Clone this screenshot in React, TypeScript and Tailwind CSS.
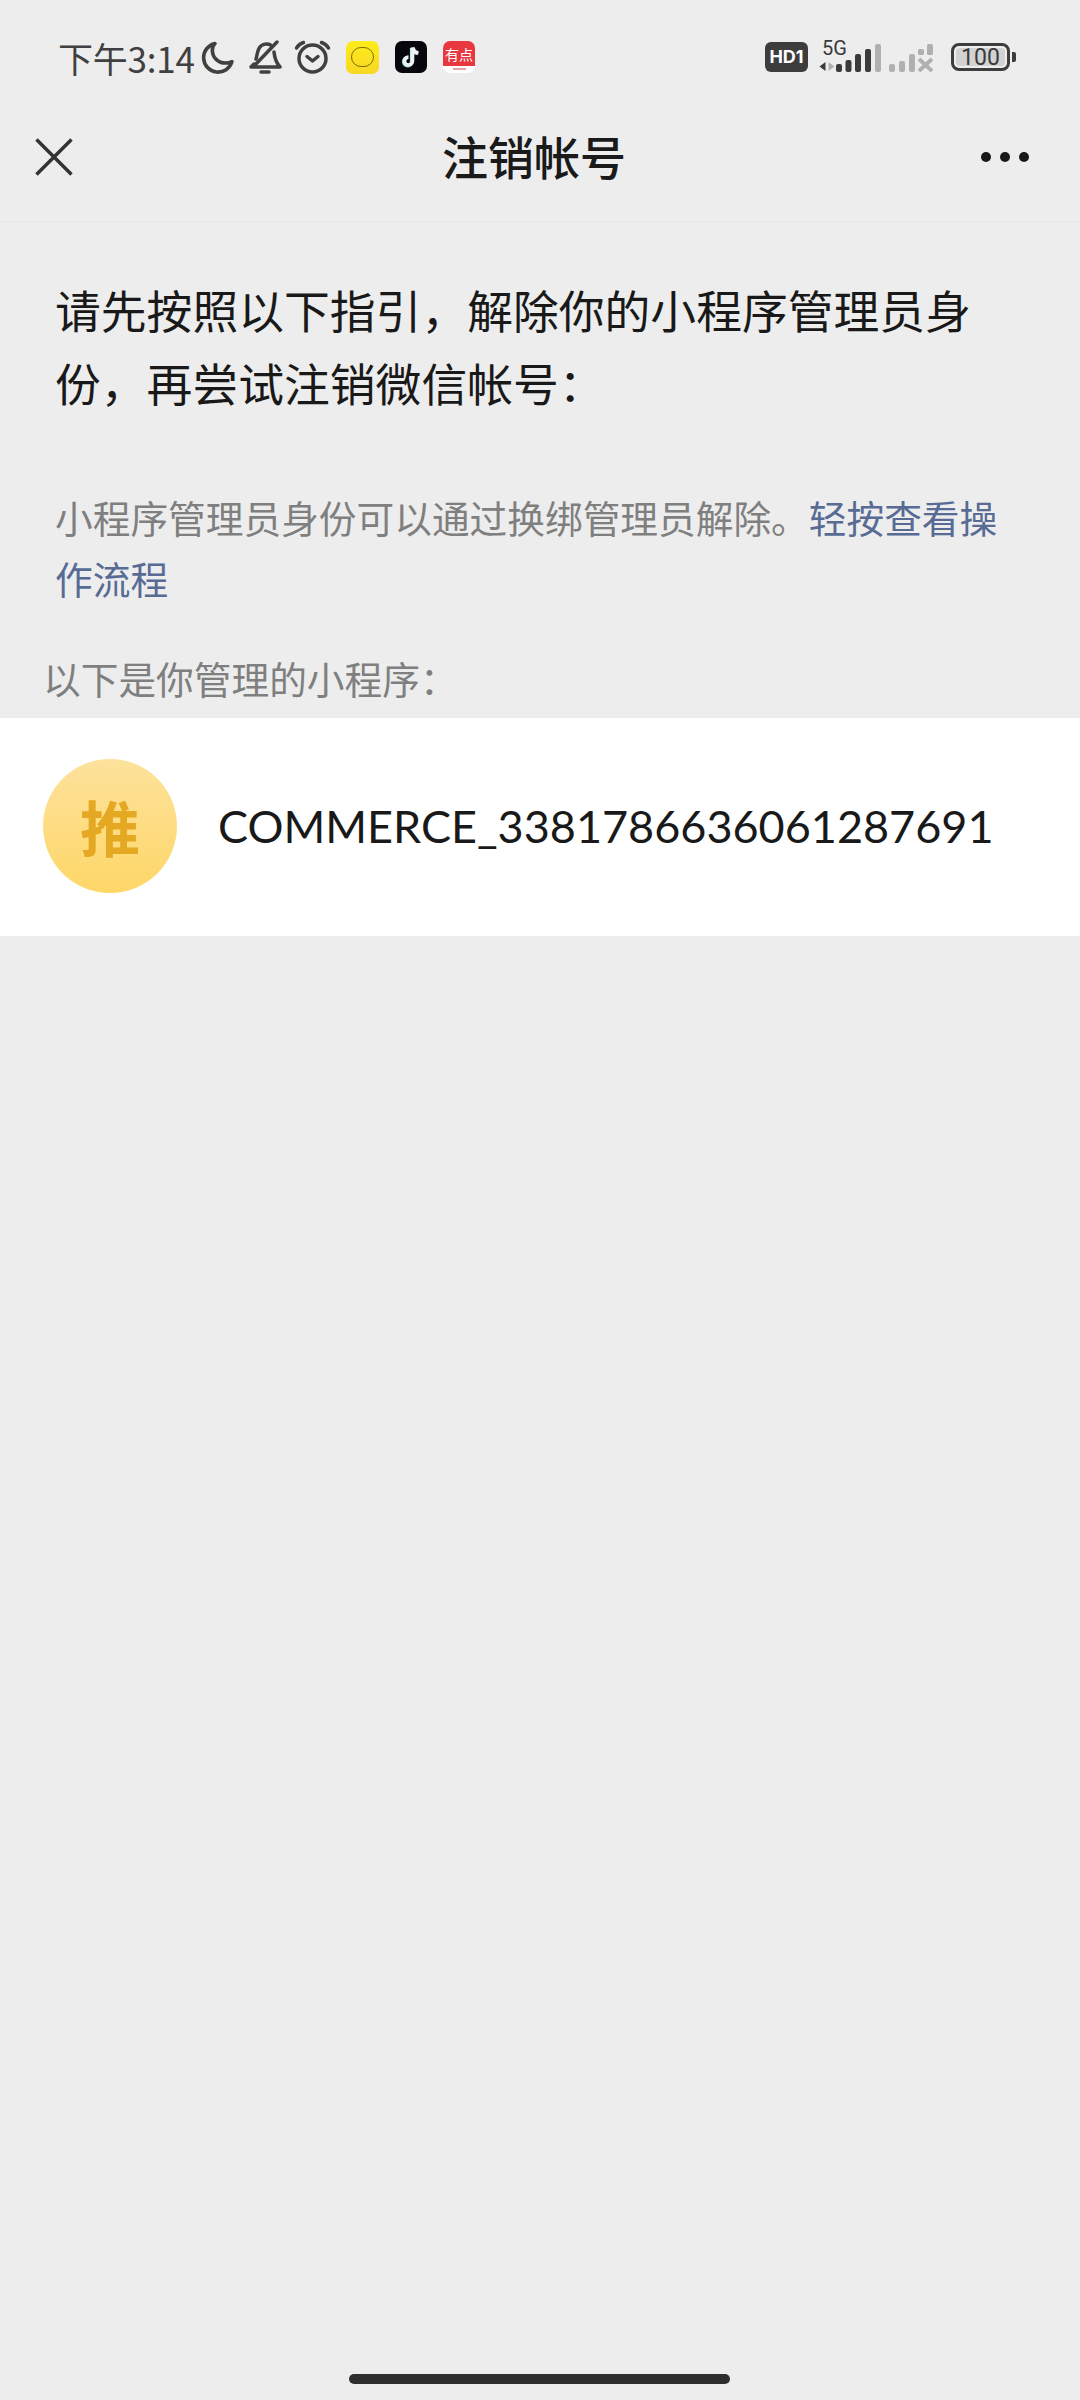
const cjk = '"Noto Sans CJK SC", sans-serif';
const comma = '\uFF0C';
const colon = '\uFF1A';

function Moon() {
    return (
        <svg width="33" height="33" viewBox="0 0 32 32" fill="none">
            <path d="M13.500 2.500A14 14 0 1 0 30 20c-2 1-4 1.400-6 1.400C16.500 21.400 11 16 11 9c0-2.400.6-4.600 2.500-6.500z" stroke="#404040" strokeWidth="3.500" strokeLinejoin="round" />
        </svg>
    );
}

function Bell() {
    return (
        <svg width="34" height="36" viewBox="0 0 34 36" fill="none" stroke="#404040" strokeWidth="3.500" strokeLinecap="round" strokeLinejoin="round">
            <path d="M8 20c1-3 1-6 2.500-9.500 1.500-3.500 4.500-5.500 8-5.500 1.500 0 3 .4 4 1" />
            <path d="M26 13c.5 5 1.500 10 6 15H3l3-3" />
            <path d="M29 3 6 27" />
            <path d="M13 33h8" />
        </svg>
    );
}

function Alarm() {
    return (
        <svg width="37" height="36" viewBox="0 0 36 36" fill="none" stroke="#404040" strokeWidth="3.500" strokeLinecap="round" strokeLinejoin="round">
            <circle cx="18" cy="19.500" r="13.500" />
            <path d="M12.500 17.500 18 22l5.500-4.500" />
            <path d="M2 9C4 6 6 4.500 9 3.500" />
            <path d="M34 9C32 6 30 4.500 27 3.500" />
        </svg>
    );
}

function TikTok() {
    return (
        <svg width="32" height="32" viewBox="0 0 31 32" className="rounded-[7px] bg-[#07060d]">
            <path d="M17 6.500v13.500a4 4 0 1 1-4-4" fill="none" stroke="#8fe6ea" strokeWidth="3.600" transform="translate(-0.800 0.600)" />
            <path d="M17.500 6.500c.4 3 2.400 5 5.500 5.300" fill="none" stroke="#8fe6ea" strokeWidth="3.600" transform="translate(-0.800 0.600)" />
            <path d="M17 6.500v13.500a4 4 0 1 1-4-4" fill="none" stroke="#f0f0f0" strokeWidth="3.600" />
            <path d="M17.500 6.500c.4 3 2.400 5 5.500 5.300" fill="none" stroke="#f0f0f0" strokeWidth="3.600" />
        </svg>
    );
}

function Signal() {
    return (
        <svg width="62" height="30" viewBox="0 0 62 30">
            <rect x="17" y="22" width="6" height="8" rx="2" fill="#3a3a3a" />
            <rect x="26.500" y="18" width="6" height="12" rx="2" fill="#3a3a3a" />
            <rect x="36" y="12" width="6" height="18" rx="2" fill="#3a3a3a" />
            <rect x="46" y="7" width="6" height="23" rx="2" fill="#3a3a3a" />
            <rect x="56" y="2" width="6" height="28" rx="2" fill="#b0b0b0" />
            <path d="M6.500 20v9L0.500 24.500z" fill="#3a3a3a" />
            <path d="M9.500 20v9l6-4.500z" fill="#b0b0b0" />
        </svg>
    );
}

function SignalOff() {
    return (
        <svg width="44" height="30" viewBox="0 0 44 30">
            <rect x="0" y="22" width="6" height="8" rx="2" fill="#b0b0b0" />
            <rect x="10" y="19" width="6" height="11" rx="2" fill="#b0b0b0" />
            <rect x="20" y="12" width="6" height="18" rx="2" fill="#b0b0b0" />
            <rect x="29" y="7" width="6" height="6" rx="1.500" fill="#b0b0b0" />
            <rect x="38" y="2" width="6" height="11" rx="1.500" fill="#b0b0b0" />
            <path d="M30 17 43 29M43 17 30 29" stroke="#b0b0b0" strokeWidth="4" />
        </svg>
    );
}

function StatusBar() {
    return (
        <div className="flex h-[114px] items-center pr-[64px] pl-[58px]">
            <span className="w-[143px] text-[35px] leading-none tracking-[-0.2px] whitespace-nowrap text-[#404040]">下午3:14</span>
            <Moon />
            <span className="ml-[14px] flex"><Bell /></span>
            <span className="ml-[12px] flex"><Alarm /></span>
            <div className="ml-[15px] flex h-[33px] w-[33px] items-center justify-center rounded-[7px] bg-[linear-gradient(#ffec1a,#f7d824)]">
                <div className="h-[20px] w-[23px] rounded-full border border-[#7a6f00]" />
            </div>
            <span className="ml-[16px] flex"><TikTok /></span>
            <div className="ml-[16px] flex h-[32px] w-[32px] flex-col items-center overflow-hidden rounded-[7px] bg-white">
                <div className="flex h-[25px] w-full items-center justify-center bg-[#e8373f] text-[14px] leading-none text-white">有点</div>
                <div className="mt-[2px] h-[2px] w-[13px] bg-[#e8a0a0]" />
            </div>
            <div className="ml-auto flex h-[30px] w-[43px] items-center justify-center rounded-[6px] bg-[#3d3d3d] text-[18px] leading-none font-bold text-white" style={{ fontFamily: 'Inter, sans-serif' }}>
                HD1
            </div>
            <div className="relative ml-[11px] flex h-[30px] w-[62px]">
                <span className="absolute top-[-3px] left-[3px] text-[20px] leading-[18px] text-[#3a3a3a]" style={{ fontFamily: 'Roboto, sans-serif' }}>5G</span>
                <Signal />
            </div>
            <span className="ml-[8px] flex"><SignalOff /></span>
            <div className="ml-[18px] flex h-[28px] w-[59px] items-center rounded-[8px] border-[3px] border-[#3d3d3d] p-[2px]">
                <div className="flex h-full w-full items-center justify-center rounded-[4px] bg-[#d2d2d2] text-[23px] leading-none text-[#3a3a3a]" style={{ fontFamily: 'Roboto, sans-serif' }}>
                    100
                </div>
            </div>
            <div className="ml-[2px] h-[10px] w-[4px] rounded-r-[2px] bg-[#3d3d3d]" />
        </div>
    );
}

function NavBar() {
    return (
        <div className="flex h-[108px] items-center justify-between border-b border-[#e6e6e6] pr-[51px] pb-[22px] pl-[35px]">
            <svg width="38" height="38" viewBox="0 0 38 38" fill="none" stroke="#333333" strokeWidth="3.500">
                <path d="M1.500 1.500 36.500 36.500M36.500 1.500 1.500 36.500" />
            </svg>
            <h1 className="mt-[-3px] ml-[14px] text-[46px] leading-none font-medium text-[#1a1a1a]">注销帐号</h1>
            <div className="flex gap-[9px]">
                <span className="h-[10px] w-[10px] rounded-full bg-[#191919]" />
                <span className="h-[10px] w-[10px] rounded-full bg-[#191919]" />
                <span className="h-[10px] w-[10px] rounded-full bg-[#191919]" />
            </div>
        </div>
    );
}

export default function App() {
    return (
        <div className="relative flex h-[2400px] w-[1080px] flex-col overflow-hidden bg-[#ededed]" style={{ fontFamily: cjk }}>
            <StatusBar />
            <NavBar />

            <div className="pt-[51px] pr-[56px] pl-[55px]">
                <p className="text-[45.8px] leading-[73px] text-[#191919]">
                    请先按照以下指引{comma}解除你的小程序管理员身份{comma}再尝试注销微信帐号{colon}
                </p>
                <p className="mt-[67px] text-[37.7px] leading-[61px] text-[#7f7f7f]">
                    小程序管理员身份可以通过换绑管理员解除。
                    <span className="text-[#576b95]">轻按查看操作流程</span>
                </p>
            </div>

            <div className="mt-[40px] pl-[43px] text-[37.7px] leading-[60px] text-[#7f7f7f]">以下是你管理的小程序{colon}</div>

            <div className="mt-[10px] flex h-[218px] items-center bg-white pl-[43px]">
                <div className="mt-[-2px] flex h-[134px] w-[134px] items-center justify-center rounded-full bg-[linear-gradient(#fde29c,#fed768)] text-[60px] leading-none font-bold text-[#e5a823]">
                    推
                </div>
                <span className="mt-[-2px] ml-[41px] text-[45px] leading-none text-[#191919]" style={{ fontFamily: 'Lato, sans-serif' }}>
                    COMMERCE_3381786636061287691
                </span>
            </div>

            <div className="absolute bottom-[16px] left-[349px] h-[10px] w-[381px] rounded-full bg-[#2e2e2e]" />
        </div>
    );
}
